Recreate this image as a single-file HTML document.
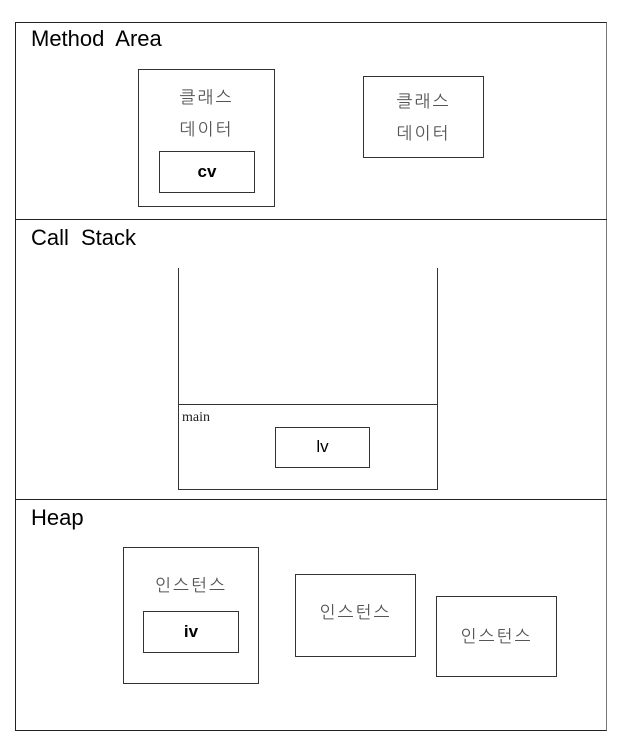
<!DOCTYPE html>
<html><head><meta charset="utf-8"><style>
body{margin:0;width:632px;height:744px;background:#fff;position:relative;overflow:hidden;font-family:"Liberation Sans","NanumGothic",sans-serif;}
div{position:absolute;box-sizing:border-box;}
.b{border:1.5px solid #333;}
.lbl{font-size:22px;color:#000;word-spacing:6px;line-height:1;}
.k{font-size:17px;color:#555;letter-spacing:2px;font-family:"NanumGothic","Noto Sans CJK KR",sans-serif;text-align:center;}
.v{font-size:17px;font-weight:bold;color:#000;text-align:center;}
</style></head><body>
<div style="left:15px;top:22px;width:592px;height:709px;border:1.5px solid #222;border-right-color:#777;"></div>
<div style="left:15px;top:219px;width:592px;height:0;border-top:1.5px solid #222;"></div>
<div style="left:15px;top:499px;width:592px;height:0;border-top:1.5px solid #222;"></div>

<div class="lbl" style="left:31px;top:28px;">Method Area</div>
<div class="b" style="left:138px;top:69px;width:137px;height:138px;"></div>
<div class="k" style="left:138px;top:87px;width:137px;">클래스</div>
<div class="k" style="left:138px;top:119px;width:137px;">데이터</div>
<div class="b" style="left:159px;top:151px;width:96px;height:42px;"></div>
<div class="v" style="left:159px;top:162px;width:96px;">cv</div>
<div class="b" style="left:363px;top:76px;width:121px;height:82px;"></div>
<div class="k" style="left:363px;top:91px;width:121px;">클래스</div>
<div class="k" style="left:363px;top:123px;width:121px;">데이터</div>

<div class="lbl" style="left:31px;top:227px;">Call Stack</div>
<div style="left:178px;top:268px;width:260px;height:222px;border:1.5px solid #333;border-top:none;"></div>
<div style="left:178px;top:404px;width:260px;height:0;border-top:1.5px solid #333;"></div>
<div style="left:182px;top:410px;font-family:'Liberation Serif',serif;font-size:14px;color:#222;">main</div>
<div class="b" style="left:275px;top:427px;width:95px;height:41px;"></div>
<div class="v" style="left:275px;top:437px;width:95px;font-weight:normal;">lv</div>

<div class="lbl" style="left:31px;top:507px;">Heap</div>
<div class="b" style="left:123px;top:547px;width:136px;height:137px;"></div>
<div class="k" style="left:123px;top:575px;width:136px;">인스턴스</div>
<div class="b" style="left:143px;top:611px;width:96px;height:42px;"></div>
<div class="v" style="left:143px;top:622px;width:96px;">iv</div>
<div class="b" style="left:295px;top:574px;width:121px;height:83px;"></div>
<div class="k" style="left:295px;top:602px;width:121px;">인스턴스</div>
<div class="b" style="left:436px;top:596px;width:121px;height:81px;"></div>
<div class="k" style="left:436px;top:626px;width:121px;">인스턴스</div>
</body></html>
